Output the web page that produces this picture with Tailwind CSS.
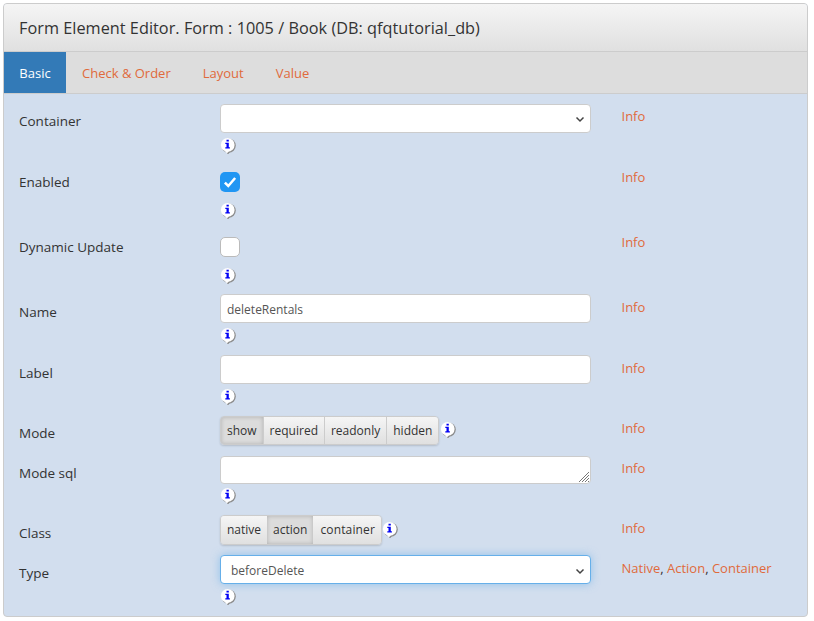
<!DOCTYPE html>
<html lang="en">
<head>
    <meta charset="UTF-8">
    <title>Form Element Editor</title>
    <script src="https://cdn.jsdelivr.net/npm/@tailwindcss/browser@4"></script>
</head>
<body class="bg-white font-['Open_Sans','Noto_Sans',sans-serif] text-[13px] text-[#333] overflow-hidden">
    <svg class="hidden">
        <symbol id="note" viewBox="0 0 16 16">
            <circle cx="8.6" cy="7.6" r="7.2" fill="#8c8c8c"/>
            <path d="M5.5 13.5 8 16.4 10.5 13.5z" fill="#8c8c8c"/>
            <circle cx="7.7" cy="6.9" r="6.9" fill="#fff"/>
            <path d="M5 13 6.9 15.4 9 13z" fill="#fff"/>
            <path d="M6.5 1.8h2.3v1.8H6.5zM5.3 4.8h3.5v4.5h1.1v1.2H5.3V9.3h1.2V6H5.3z" fill="#0000f5"/>
        </symbol>
    </svg>

    <div class="ml-[3px] mt-[3px] w-[805px] h-[614px] border border-[#ccc] rounded-[4px] bg-[#d2deee] overflow-hidden">
        <!-- Heading -->
        <div class="h-[48px] pl-[15px] pt-[2px] flex items-center text-[16.25px] tracking-[0.03px] bg-gradient-to-b from-[#f5f5f5] to-[#e0e0e0] border-b border-[#ccc]">
            Form Element Editor. Form : 1005 / Book (DB: qfqtutorial_db)
        </div>

        <!-- Tabs -->
        <div class="h-[42px] flex bg-[#ddd] border-b border-[#ccc] text-[#e06a3b]">
            <div class="w-[62px] pt-[2px] bg-[#337ab7] text-white flex items-center justify-center">Basic</div>
            <div class="px-[16px] pt-[2px] flex items-center">Check &amp; Order</div>
            <div class="px-[16px] pt-[2px] flex items-center">Layout</div>
            <div class="px-[16px] pt-[2px] flex items-center">Value</div>
        </div>

        <!-- Rows -->
        <div class="pt-[10px] pl-[15px]">
            <div class="flex h-[61px]">
                <div class="w-[201px] pt-[8px] text-[13.5px] leading-[19.5px]">Container</div>
                <div class="w-[401.5px]">
                    <div class="w-[371px] h-[29px] bg-white border border-[#ccc] rounded-[4px] flex items-center justify-end pr-[4px]">
                        <svg class="w-[12px] h-[12px]" viewBox="0 0 12 12"><path d="M2.5 4.5 6 8l3.5-3.5" fill="none" stroke="#444" stroke-width="1.5"/></svg>
                    </div>
                    <svg class="w-[16px] h-[16px] mt-[5px]"><use href="#note"/></svg>
                </div>
                <div class="pt-[3px] text-[#e06a3b]">Info</div>
            </div>

            <div class="flex h-[65px]">
                <div class="w-[201px] pt-[8px] text-[13.5px] leading-[19.5px]">Enabled</div>
                <div class="w-[401.5px] pt-[7px]">
                    <div class="w-[20px] h-[20px] rounded-[5px] bg-[#2196f3] flex items-center justify-center">
                        <svg class="w-[16px] h-[16px]" viewBox="0 0 14 14"><path d="M2.5 7.5 5.5 10.5 11.5 3.5" fill="none" stroke="#fff" stroke-width="2.2"/></svg>
                    </div>
                    <svg class="w-[16px] h-[16px] mt-[11px]"><use href="#note"/></svg>
                </div>
                <div class="pt-[3px] text-[#e06a3b]">Info</div>
            </div>

            <div class="flex h-[64px]">
                <div class="w-[201px] pt-[8px] text-[13.5px] leading-[19.5px]">Dynamic Update</div>
                <div class="w-[401.5px] pt-[7px]">
                    <div class="w-[20px] h-[20px] rounded-[5px] bg-white border border-[#bbb]"></div>
                    <svg class="w-[16px] h-[16px] mt-[11px]"><use href="#note"/></svg>
                </div>
                <div class="pt-[3px] text-[#e06a3b]">Info</div>
            </div>

            <div class="flex h-[61px]">
                <div class="w-[201px] pt-[9px] text-[13.5px] leading-[19.5px]">Name</div>
                <div class="w-[401.5px]">
                    <div class="w-[371px] h-[29px] bg-white border border-[#ccc] rounded-[4px] flex items-center pl-[6px] pt-[2px] text-[12px] text-[#555]">deleteRentals</div>
                    <svg class="w-[16px] h-[16px] mt-[5px]"><use href="#note"/></svg>
                </div>
                <div class="pt-[4px] text-[#e06a3b]">Info</div>
            </div>

            <div class="flex h-[61px]">
                <div class="w-[201px] pt-[9px] text-[13.5px] leading-[19.5px]">Label</div>
                <div class="w-[401.5px]">
                    <div class="w-[371px] h-[29px] bg-white border border-[#ccc] rounded-[4px]"></div>
                    <svg class="w-[16px] h-[16px] mt-[5px]"><use href="#note"/></svg>
                </div>
                <div class="pt-[4px] text-[#e06a3b]">Info</div>
            </div>

            <div class="flex h-[40px]">
                <div class="w-[201px] pt-[8px] text-[13.5px] leading-[19.5px]">Mode</div>
                <div class="w-[401.5px] flex items-start gap-[1px]">
                    <div class="h-[29px] flex rounded-[4px] border border-[#ccc] shadow-[0_1px_2px_rgba(0,0,0,0.15)] text-[12px] overflow-hidden">
                        <div class="px-[6px] flex items-center bg-[#dcdcdc] shadow-[inset_0_0_4px_rgba(0,0,0,0.2)]">show</div>
                        <div class="px-[6px] flex items-center bg-gradient-to-b from-[#f5f5f5] to-[#e0e0e0] border-l border-[#ccc]">required</div>
                        <div class="px-[6px] flex items-center bg-gradient-to-b from-[#f5f5f5] to-[#e0e0e0] border-l border-[#ccc]">readonly</div>
                        <div class="px-[6px] flex items-center bg-gradient-to-b from-[#f5f5f5] to-[#e0e0e0] border-l border-[#ccc]">hidden</div>
                    </div>
                    <svg class="w-[16px] h-[16px] mt-[6px]"><use href="#note"/></svg>
                </div>
                <div class="pt-[3px] text-[#e06a3b]">Info</div>
            </div>

            <div class="flex h-[59px]">
                <div class="w-[201px] pt-[8px] text-[13.5px] leading-[19.5px]">Mode sql</div>
                <div class="w-[401.5px]">
                    <div class="relative w-[371px] h-[28px] bg-white border border-[#ccc] rounded-[4px]">
                        <svg class="absolute right-0 bottom-0 w-[12px] h-[12px]" viewBox="0 0 12 12"><path d="M11 1 1 11M11 4l-7 7M11 7l-4 4M11 10l-1 1" stroke="#777" fill="none"/></svg>
                    </div>
                    <svg class="w-[16px] h-[16px] mt-[4px]"><use href="#note"/></svg>
                </div>
                <div class="pt-[3px] text-[#e06a3b]">Info</div>
            </div>

            <div class="flex h-[40px]">
                <div class="w-[201px] pt-[9px] text-[13.5px] leading-[19.5px]">Class</div>
                <div class="w-[401.5px] flex items-start">
                    <div class="h-[30px] flex rounded-[4px] border border-[#ccc] shadow-[0_1px_2px_rgba(0,0,0,0.15)] text-[12px] overflow-hidden">
                        <div class="px-[6px] flex items-center bg-gradient-to-b from-[#f5f5f5] to-[#e0e0e0]">native</div>
                        <div class="px-[6px] flex items-center bg-[#dcdcdc] shadow-[inset_0_0_4px_rgba(0,0,0,0.2)]">action</div>
                        <div class="pl-[7px] pr-[6px] tracking-[0.15px] flex items-center bg-gradient-to-b from-[#f5f5f5] to-[#e0e0e0]">container</div>
                    </div>
                    <svg class="w-[16px] h-[16px] mt-[7px]"><use href="#note"/></svg>
                </div>
                <div class="pt-[4px] text-[#e06a3b]">Info</div>
            </div>

            <div class="flex h-[60px]">
                <div class="w-[201px] pt-[9px] text-[13.5px] leading-[19.5px]">Type</div>
                <div class="w-[401.5px]">
                    <div class="w-[371px] h-[29px] bg-white border border-[#66afe9] rounded-[4px] shadow-[0_0_8px_rgba(102,175,233,0.6)] flex items-center justify-between pl-[10px] pr-[4px] pt-[2px] text-[12px] text-[#555]">
                        beforeDelete
                        <svg class="w-[12px] h-[12px]" viewBox="0 0 12 12"><path d="M2.5 4.5 6 8l3.5-3.5" fill="none" stroke="#444" stroke-width="1.5"/></svg>
                    </div>
                    <svg class="w-[16px] h-[16px] mt-[5px]"><use href="#note"/></svg>
                </div>
                <div class="pt-[4px] text-[#e06a3b]"><span>Native</span><span class="text-[#333]">,</span> <span>Action</span><span class="text-[#333]">,</span> <span>Container</span></div>
            </div>
        </div>
    </div>
</body>
</html>
